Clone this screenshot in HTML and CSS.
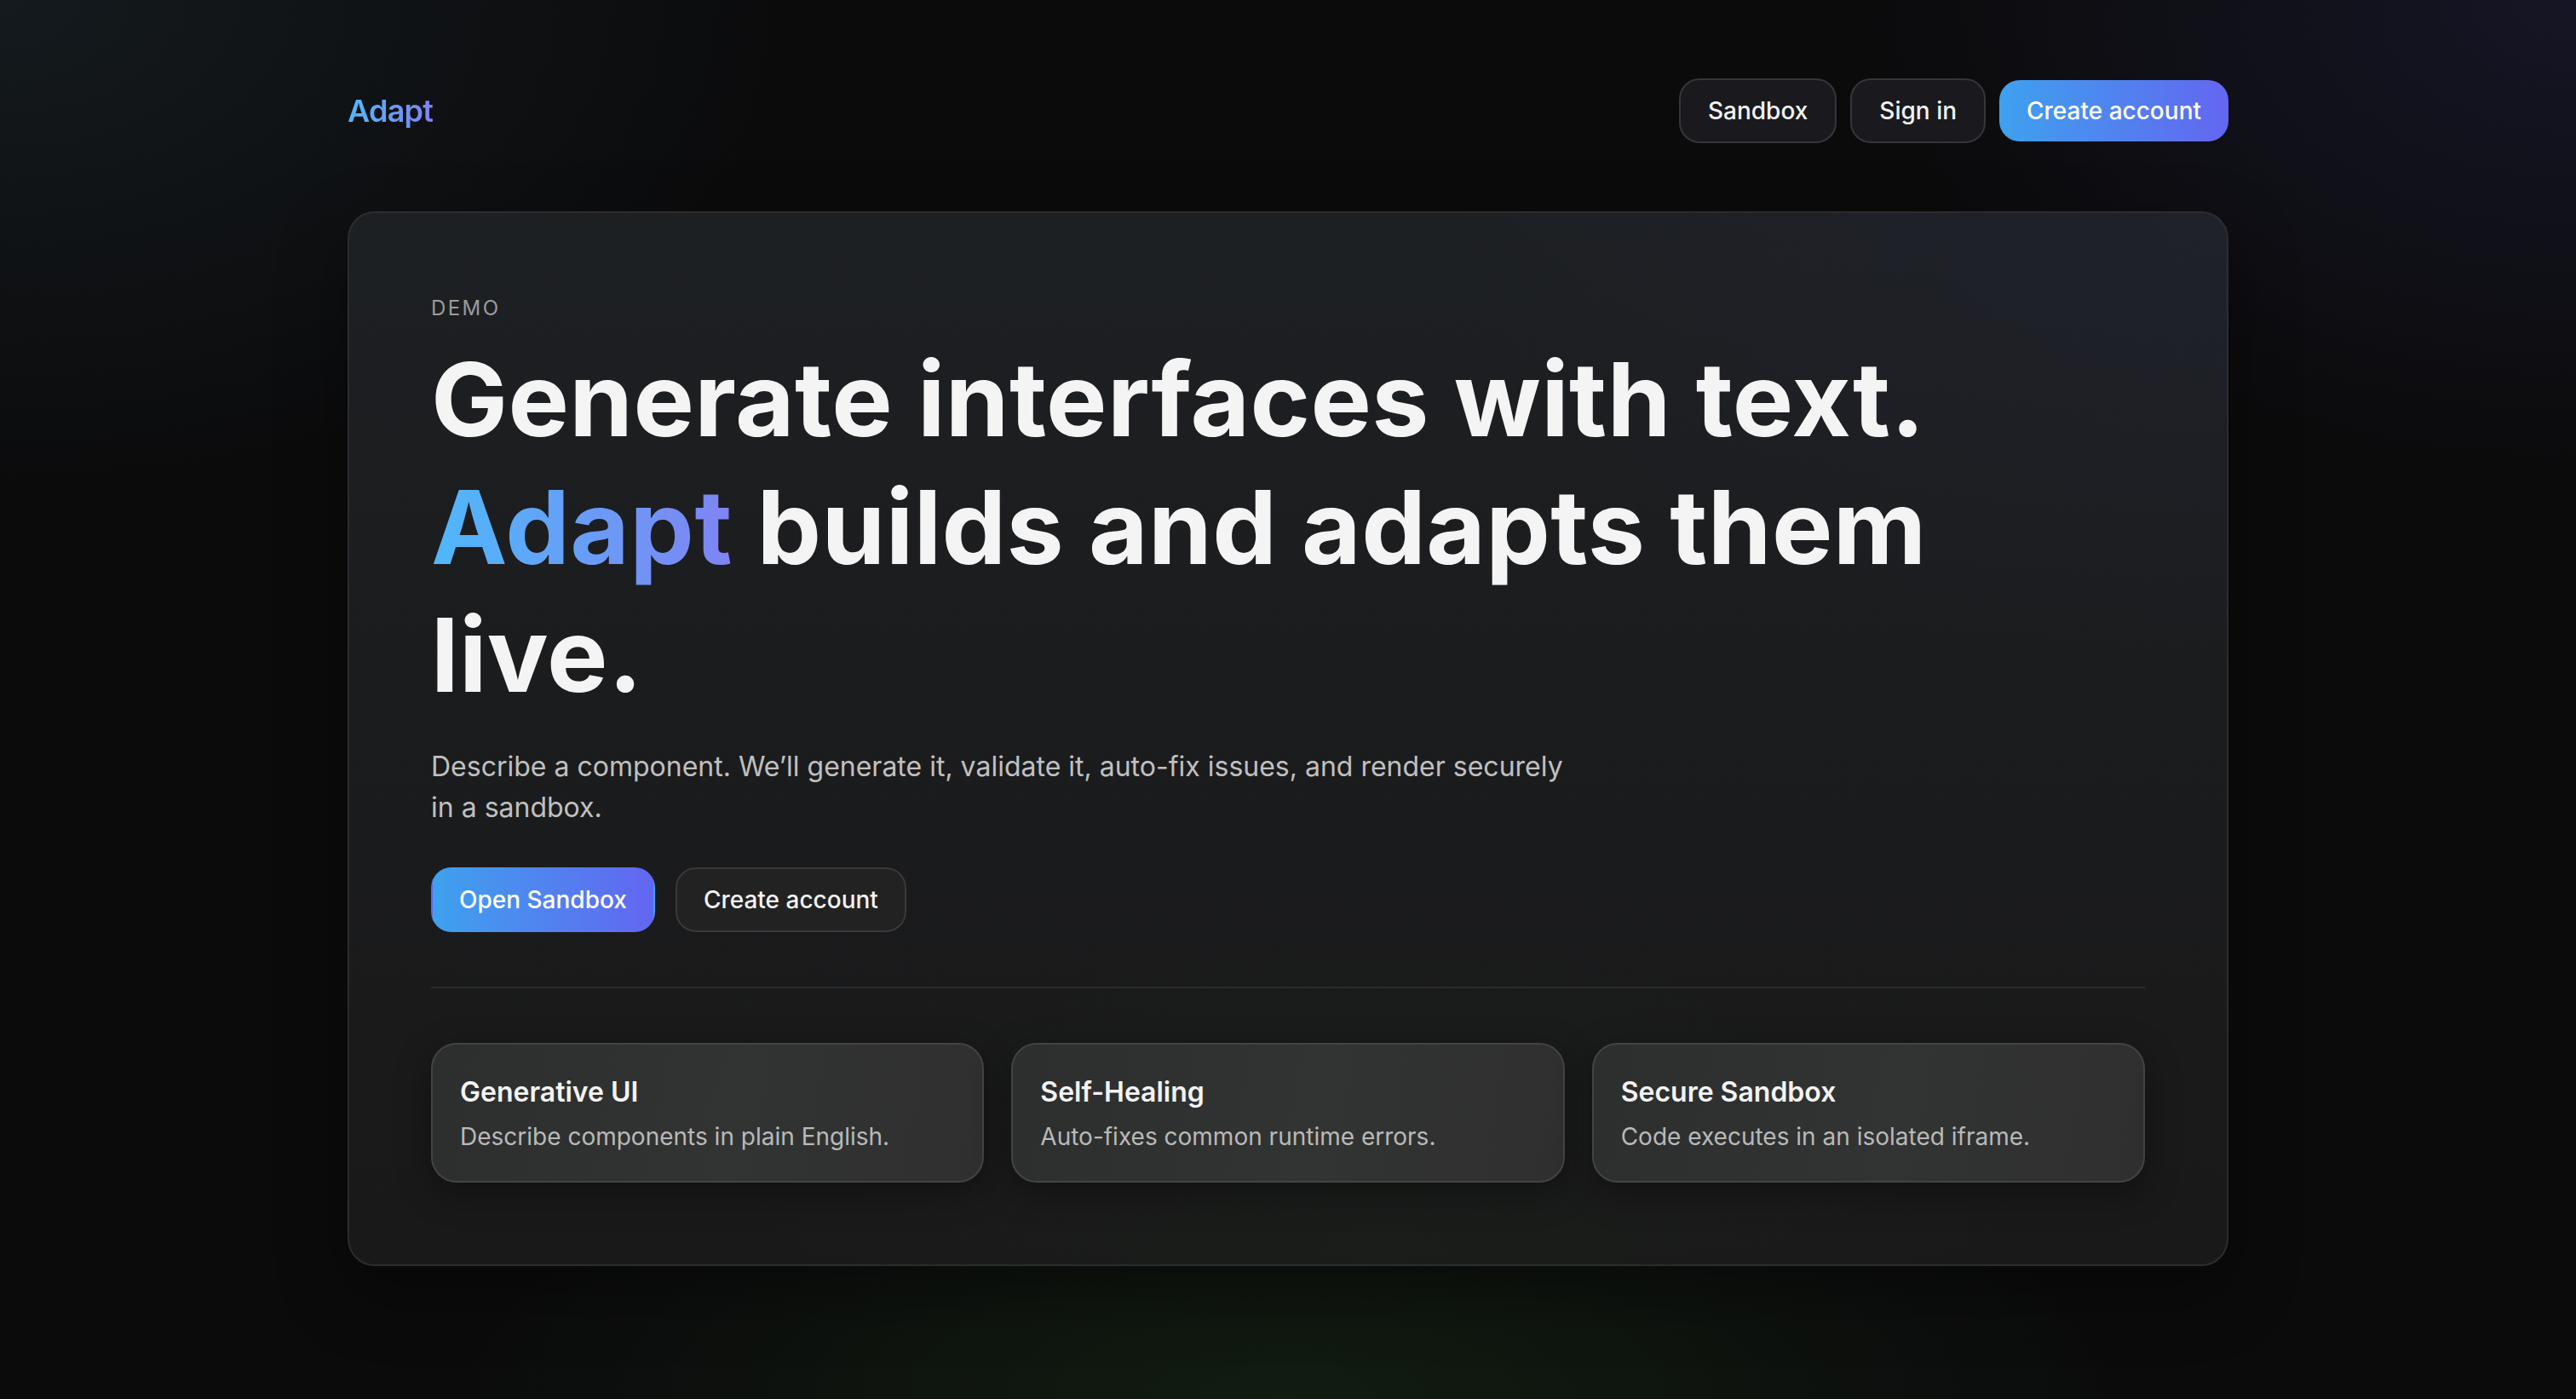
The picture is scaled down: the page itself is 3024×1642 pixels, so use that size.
FILE: index.html
```html
<!DOCTYPE html>
<html lang="en">
<head>
<meta charset="utf-8">
<title>Adapt</title>
<link rel="stylesheet" href="styles.css">
</head>
<body>
<div class="page">
  <header class="header">
    <a class="logo" href="#">Adapt</a>
    <nav class="nav">
      <a class="btn btn-ghost" href="#">Sandbox</a>
      <a class="btn btn-ghost" href="#">Sign in</a>
      <a class="btn btn-primary btn-nav" href="#">Create account</a>
    </nav>
  </header>

  <main class="hero">
    <p class="eyebrow">DEMO</p>
    <h1 class="headline">Generate interfaces with text. <span class="grad">Adapt</span> builds and adapts them live.</h1>
    <p class="lead">Describe a component. We’ll generate it, validate it, auto-fix issues, and render securely in a sandbox.</p>
    <div class="actions">
      <a class="btn btn-primary btn-hero" href="#">Open Sandbox</a>
      <a class="btn btn-secondary" href="#">Create account</a>
    </div>
    <hr class="divider">
    <div class="features">
      <div class="feature">
        <h3 class="feature-title">Generative UI</h3>
        <p class="feature-desc">Describe components in plain English.</p>
      </div>
      <div class="feature">
        <h3 class="feature-title">Self-Healing</h3>
        <p class="feature-desc">Auto-fixes common runtime errors.</p>
      </div>
      <div class="feature">
        <h3 class="feature-title">Secure Sandbox</h3>
        <p class="feature-desc">Code executes in an isolated iframe.</p>
      </div>
    </div>
  </main>
</div>
</body>
</html>
```

FILE: styles.css
```css
* { box-sizing: border-box; }

html, body {
  margin: 0;
  padding: 0;
}

body {
  min-height: 1642px;
  font-family: Inter, "Noto Sans", "Liberation Sans", sans-serif;
  color: #f4f4f4;
  background-color: #0b0b0c;
  background-image:
    radial-gradient(ellipse 1300px 800px at 0% 0%, rgba(26, 36, 42, 0.6), transparent 72%),
    radial-gradient(ellipse 1200px 800px at 100% 0%, rgba(30, 30, 58, 0.55), transparent 70%),
    radial-gradient(ellipse 1400px 520px at 50% 100%, rgba(22, 40, 20, 0.6), transparent 70%);
}

a { text-decoration: none; color: inherit; }

.page {
  width: 2208px;
  margin: 0 auto;
  padding-top: 92px;
}

.header {
  display: flex;
  align-items: center;
  justify-content: space-between;
  height: 76px;
}

.logo {
  font-size: 36px;
  line-height: 56px;
  font-weight: 600;
  letter-spacing: -0.02em;
  background: linear-gradient(90deg, #4fb8fa, #8083f4);
  -webkit-background-clip: text;
  background-clip: text;
  color: transparent;
}

.nav {
  display: flex;
  align-items: center;
  gap: 16px;
}

.btn {
  display: inline-flex;
  align-items: center;
  justify-content: center;
  font-size: 28px;
  line-height: 40px;
  font-weight: 500;
  padding: 16px 32px;
  border-radius: 24px;
  color: #f3f3f3;
  white-space: nowrap;
}

.btn-ghost {
  background: #1a1a1e;
  border: 2px solid #35353a;
}

.btn-primary {
  background: linear-gradient(90deg, #3ea1ee, #6366f1);
  color: #ffffff;
}

.btn-nav {
  border: 0;
}

.btn-hero {
  border: 2px solid transparent;
  background-clip: border-box;
  padding: 16px 31px;
}

.btn-secondary {
  background: #222222;
  border: 2px solid #393939;
  padding: 16px 31px;
}

.hero {
  margin-top: 80px;
  border: 2px solid #2c2d30;
  border-radius: 32px;
  padding: 96px;
  background-color: #19191a;
  background-image:
    radial-gradient(ellipse 1200px 700px at 100% 0%, rgba(34, 35, 50, 0.55), transparent 75%),
    radial-gradient(ellipse 1000px 500px at 55% 100%, rgba(28, 36, 28, 0.35), transparent 75%),
    linear-gradient(180deg, #1d2023 0%, #1b1c1e 45%, #191919 100%);
  box-shadow: 0 30px 80px rgba(0, 0, 0, 0.35);
}

.eyebrow {
  margin: 0;
  font-size: 24px;
  line-height: 32px;
  letter-spacing: 0.1em;
  color: #9b9b9b;
}

.headline {
  margin: 16px 0 0;
  font-size: 120px;
  line-height: 150px;
  font-weight: 700;
  letter-spacing: 0.4px;
  color: #f4f4f4;
  max-width: 1900px;
}

.grad {
  background: linear-gradient(90deg, #4fb8fa, #8083f4);
  -webkit-background-clip: text;
  background-clip: text;
  color: transparent;
}

.lead {
  margin: 32px 0 0;
  max-width: 1344px;
  font-size: 32px;
  line-height: 48px;
  color: #c0c0c0;
}

.actions {
  display: flex;
  gap: 24px;
  margin-top: 46px;
}

.divider {
  margin: 64px 0 0;
  border: 0;
  height: 2px;
  background: #2a2b2b;
}

.features {
  margin-top: 64px;
  display: grid;
  grid-template-columns: repeat(3, 1fr);
  gap: 32px;
}

.feature {
  padding: 32px;
  border: 2px solid #424343;
  border-radius: 30px;
  background: linear-gradient(100deg, #2d2e2e 0%, #313432 55%, #2f2f2f 100%);
  box-shadow: 0 12px 40px rgba(0, 0, 0, 0.35);
}

.feature-title {
  margin: 0;
  font-size: 32px;
  line-height: 48px;
  font-weight: 600;
  color: #f3f3f3;
}

.feature-desc {
  margin: 8px 0 0;
  font-size: 28px;
  line-height: 40px;
  color: #b9b9b9;
}
```
